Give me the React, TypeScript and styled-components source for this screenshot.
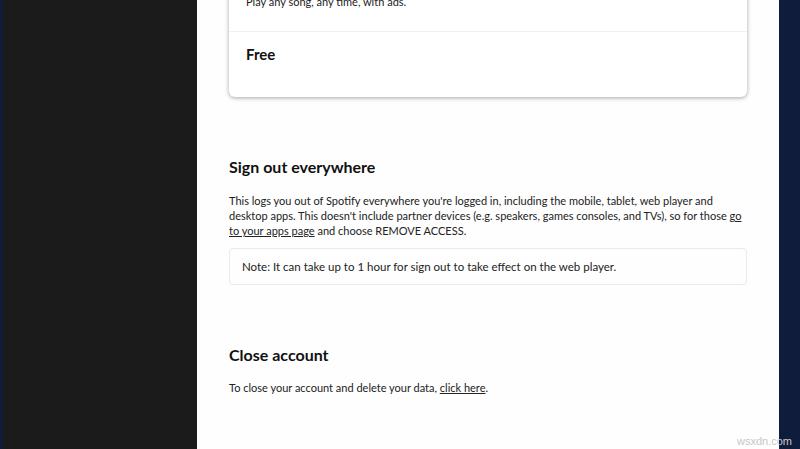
import React from "react";
import styled, { createGlobalStyle } from "styled-components";

const GlobalStyle = createGlobalStyle`
  html, body {
    margin: 0;
    padding: 0;
    height: 100%;
    overflow: hidden;
  }

  body {
    font-family: "Lato", "Liberation Sans", sans-serif;
    color: #222;
    background: #fefefe;
  }
`;

const Page = styled.div`
  display: flex;
  height: 449px;
  overflow: hidden;
`;

const Sidebar = styled.aside`
  flex: 0 0 194px;
  background: #1b1b1b;
  border-left: 3px solid #101c3c;
`;

const Main = styled.main`
  flex: 1;
  background: #fefefe;
  padding: 0 32px;
`;

const Edge = styled.div`
  flex: 0 0 21px;
  background: #101c3b;
`;

const Content = styled.div`
  width: 518px;
  margin-top: -20px;
`;

const PlanCard = styled.div`
  background: #fff;
  border-radius: 6px;
  box-shadow: 0 1px 4px rgba(0, 0, 0, 0.35);
`;

const PlanBlurb = styled.p`
  margin: 0;
  padding: 14px 17px 22px;
  font-size: 11px;
  line-height: 15px;
  border-bottom: 1px solid #f0f0f0;
`;

const PlanName = styled.h3`
  margin: 0;
  padding: 13px 17px 34px;
  font-size: 15px;
  line-height: 18px;
  font-weight: 700;
  color: #111;
`;

const Section = styled.section<{ $top: number }>`
  margin-top: ${(p) => p.$top}px;
`;

const Heading = styled.h2<{ $gap: number }>`
  margin: 0 0 ${(p) => p.$gap}px;
  font-size: 16px;
  line-height: 20px;
  font-weight: 700;
  color: #111;
`;

const Text = styled.p`
  margin: 0;
  font-size: 11px;
  line-height: 15px;
  color: #222;

  a {
    color: #222;
    text-decoration: underline;
  }
`;

const Note = styled.div`
  margin-top: 10px;
  padding: 10px 12px;
  border: 1px solid #eaeaea;
  border-radius: 4px;
  font-size: 11.5px;
  line-height: 15px;
  color: #222;
`;

const Watermark = styled.span`
  position: absolute;
  right: 8px;
  bottom: 2px;
  font-family: "Liberation Sans", sans-serif;
  font-size: 11px;
  color: #c8c8c8;
`;

export default function App() {
  return (
    <>
      <GlobalStyle />
      <Page>
        <Sidebar />
        <Main>
          <Content>
            <PlanCard>
              <PlanBlurb>Play any song, any time, with ads.</PlanBlurb>
              <PlanName>Free</PlanName>
            </PlanCard>

            <Section $top={60}>
              <Heading $gap={16}>Sign out everywhere</Heading>
              <Text>
                This logs you out of Spotify everywhere you're logged in, including the mobile, tablet, web player and
                desktop apps. This doesn't include partner devices (e.g. speakers, games consoles, and TVs), so for those{" "}
                <a href="#">go to your apps page</a> and choose REMOVE ACCESS.
              </Text>
              <Note>Note: It can take up to 1 hour for sign out to take effect on the web player.</Note>
            </Section>

            <Section $top={60}>
              <Heading $gap={15}>Close account</Heading>
              <Text>
                To close your account and delete your data, <a href="#">click here</a>.
              </Text>
            </Section>
          </Content>
        </Main>
        <Edge />
      </Page>
      <Watermark>wsxdn.com</Watermark>
    </>
  );
}
